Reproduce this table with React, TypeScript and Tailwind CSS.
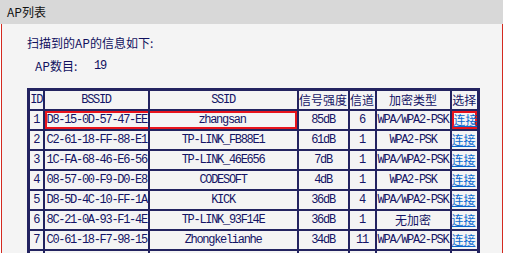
import { Fragment } from "react";

type ApRow = {
  id: number;
  bssid: string;
  ssid: string;
  signal: string;
  channel: number;
  security: string;
};

const rows: ApRow[] = [
  { id: 1, bssid: "D8-15-0D-57-47-EE", ssid: "zhangsan", signal: "85dB", channel: 6, security: "WPA/WPA2-PSK" },
  { id: 2, bssid: "C2-61-18-FF-88-E1", ssid: "TP-LINK_FB88E1", signal: "61dB", channel: 1, security: "WPA2-PSK" },
  { id: 3, bssid: "1C-FA-68-46-E6-56", ssid: "TP-LINK_46E656", signal: "7dB", channel: 1, security: "WPA/WPA2-PSK" },
  { id: 4, bssid: "08-57-00-F9-D0-E8", ssid: "CODESOFT", signal: "4dB", channel: 1, security: "WPA2-PSK" },
  { id: 5, bssid: "D8-5D-4C-10-FF-1A", ssid: "KICK", signal: "36dB", channel: 4, security: "WPA/WPA2-PSK" },
  { id: 6, bssid: "8C-21-0A-93-F1-4E", ssid: "TP-LINK_93F14E", signal: "36dB", channel: 1, security: "无加密" },
  { id: 7, bssid: "C0-61-18-F7-98-15", ssid: "Zhongkelianhe", signal: "34dB", channel: 11, security: "WPA/WPA2-PSK" },
  { id: 8, bssid: "14-75-90-3A-6C-52", ssid: "TP-LINK_3A6C52", signal: "30dB", channel: 6, security: "WPA/WPA2-PSK" },
];

const cjk = "font-['Noto_Sans_CJK_SC',sans-serif]";
const mono =
  "font-['Liberation_Mono','Noto_Sans_CJK_SC',monospace] text-[12px] tracking-[-1.3px]";
const cell =
  "border-2 border-[#232360] p-0 h-[20px] align-middle whitespace-nowrap overflow-hidden";

export default function App() {
  const selected = 1;

  return (
    <div className="h-[253px] w-[506px] overflow-hidden bg-white text-[12px] leading-[12px]">
      <div className="w-[503px]">
        <div className={`flex h-6 items-center bg-[#d8d8d8] pl-[7px] text-[#111] ${cjk}`}>
          AP列表
        </div>
        <div className="ml-px h-[229px] border-x border-[#d42a20] bg-[#f4f4f4] pl-[25px] pt-[13px]">
          <p className={`text-[#10105e] ${cjk}`}>扫描到的AP的信息如下:</p>
          <p className={`mt-[11px] flex pl-[8px] text-[#10105e] ${cjk}`}>
            <span className="w-[59px]">AP数目:</span>
            <span className={mono}>19</span>
          </p>

          <table className="mt-[16px] w-[450px] table-fixed border-collapse border-[3px] border-[#232360] text-[#141466]">
            <colgroup>
              <col className="w-[15px]" />
              <col className="w-[105px]" />
              <col className="w-[149px]" />
              <col className="w-[51px]" />
              <col className="w-[27px]" />
              <col className="w-[75px]" />
              <col className="w-[28px]" />
            </colgroup>
            <thead>
              <tr>
                <th className={`${cell} ${mono} font-normal`}>ID</th>
                <th className={`${cell} ${mono} font-normal`}>BSSID</th>
                <th className={`${cell} ${mono} font-normal`}>SSID</th>
                <th className={`${cell} ${cjk} font-normal`}>信号强度</th>
                <th className={`${cell} ${cjk} font-normal`}>信道</th>
                <th className={`${cell} ${cjk} font-normal`}>加密类型</th>
                <th className={`${cell} ${cjk} font-normal`}>选择</th>
              </tr>
            </thead>
            <tbody>
              {rows.map((row) => {
                const on = row.id === selected;
                return (
                  <Fragment key={row.id}>
                    <tr>
                      <td className={`${cell} ${mono} text-center`}>{row.id}</td>
                      <td className={cell}>
                        <div
                          className={`flex h-[18px] items-center ${mono} ${
                            on ? "border-y-2 border-l-2 border-[#e8141c]" : "pl-[2px]"
                          }`}
                        >
                          {row.bssid}
                        </div>
                      </td>
                      <td className={cell}>
                        <div
                          className={`flex h-[18px] items-center justify-center ${mono} ${
                            on ? "border-y-2 border-r-2 border-[#e8141c]" : ""
                          }`}
                        >
                          {row.ssid}
                        </div>
                      </td>
                      <td className={`${cell} ${mono} text-center`}>{row.signal}</td>
                      <td className={`${cell} ${mono} text-center`}>{row.channel}</td>
                      <td
                        className={`${cell} text-center ${
                          row.security === "无加密" ? cjk : mono
                        }`}
                      >
                        {row.security}
                      </td>
                      <td className={cell}>
                        <div
                          className={`flex h-[18px] items-center ${cjk} ${
                            on ? "border-2 border-[#e8141c]" : ""
                          }`}
                        >
                          <a href="#" className="text-[#0a6ad0] underline">
                            连接
                          </a>
                        </div>
                      </td>
                    </tr>
                  </Fragment>
                );
              })}
            </tbody>
          </table>
        </div>
      </div>
    </div>
  );
}
